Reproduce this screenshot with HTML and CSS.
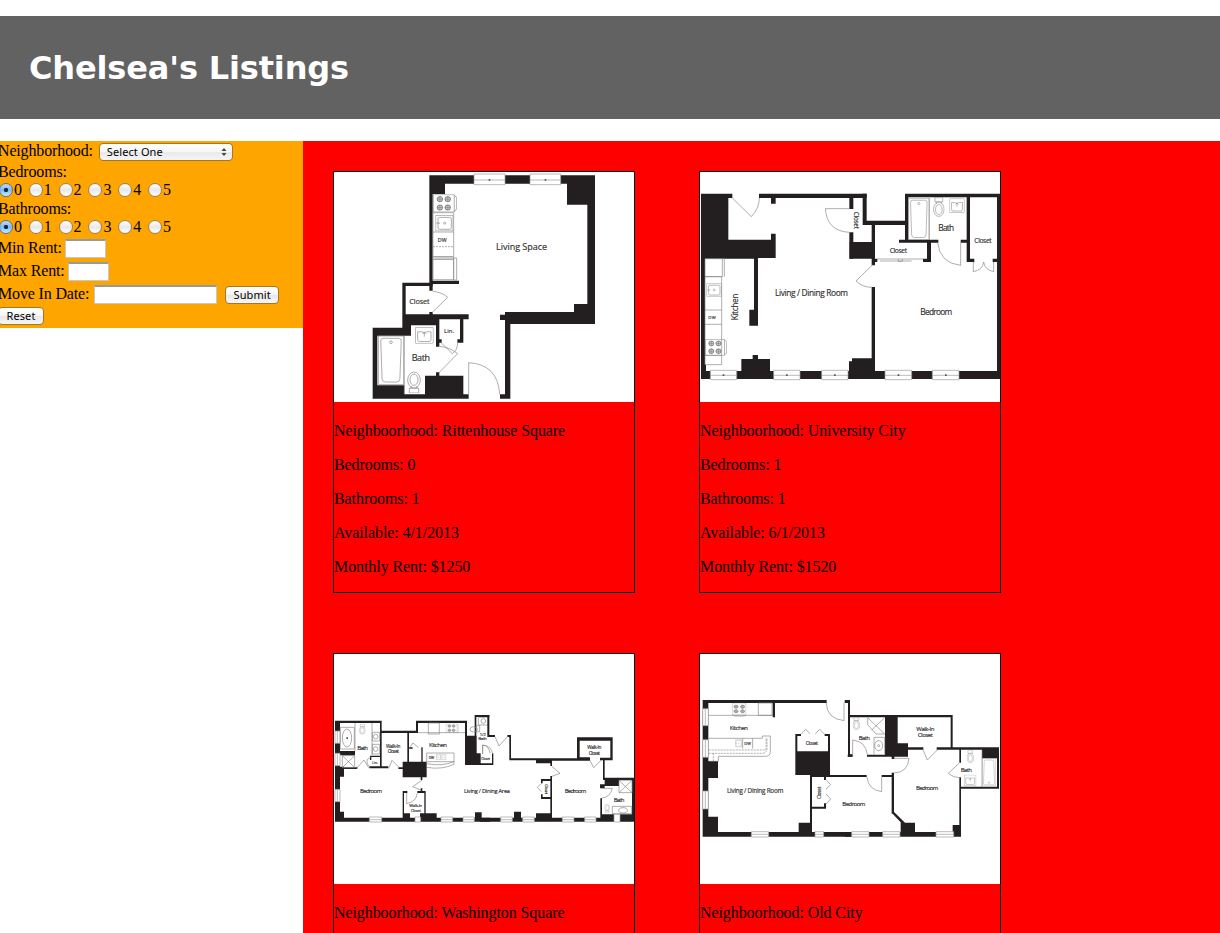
FILE: index.html
```html
<!DOCTYPE html>
<html lang="en">
<head>
<meta charset="utf-8">
<title>Chelsea's Listings</title>
<link rel="stylesheet" href="styles.css">
</head>
<body>
<svg class="defs" aria-hidden="true">
  <symbol id="stove" viewBox="0 0 70 56" preserveAspectRatio="none">
    <path class="f" d="M1 1H62V55H1zM62 4Q69 6 69 12V44Q69 50 62 52"/>
    <g class="burner"><circle cx="20" cy="15" r="8"/><circle cx="43" cy="15" r="8"/><circle cx="20" cy="41" r="8"/><circle cx="43" cy="41" r="8"/></g>
    <path class="f" d="M12 15h16M20 7v16M35 15h16M43 7v16M12 41h16M20 33v16M35 41h16M43 33v16"/>
  </symbol>
  <symbol id="sink" viewBox="0 0 54 48" preserveAspectRatio="none">
    <path class="f" d="M1 1H53V47H1z"/><rect class="f" x="8" y="7" width="40" height="35" rx="5"/><circle class="f" cx="28" cy="24" r="3"/><path class="f" d="M3 24H14"/>
  </symbol>
  <symbol id="basin" viewBox="0 0 56 52" preserveAspectRatio="none">
    <rect class="f" x="1" y="1" width="54" height="50" rx="3"/><path class="f" d="M8 15H21Q28 20 35 15H48V39Q48 45 42 45H14Q8 45 8 39zM28 17V30M23 22Q28 12 33 22"/>
  </symbol>
  <symbol id="toilet" viewBox="0 0 42 66" preserveAspectRatio="none">
    <path class="f" d="M7 1H35V15H7zM11 15L13 22M31 15L29 22"/><ellipse class="f" cx="21" cy="40" rx="19" ry="24"/><ellipse class="f" cx="21" cy="41" rx="12" ry="17"/>
  </symbol>
  <symbol id="tub" viewBox="0 0 76 150" preserveAspectRatio="none">
    <path class="f" d="M1 1H75V149H1z"/><path class="f" d="M14 8H62Q68 8 68 16L64 132Q63 141 54 141H22Q13 141 12 132L8 16Q8 8 14 8z"/><circle class="f" cx="38" cy="20" r="4"/>
  </symbol>
</svg>

<header class="banner"><h1 class="title">Chelsea's Listings</h1></header>

<main class="page">
  <form class="search">
    <div class="row row-select"><label for="hood">Neighborhood:</label><span class="select-wrap"><select id="hood" class="select"><option>Select One</option></select><svg class="arrows" viewBox="0 0 6 8"><path d="M3 0L5.5 3H.5zM3 8L.5 5H5.5z"/></svg></span></div>
    <div class="row">Bedrooms:</div>
    <div class="row radios">
      <label><input type="radio" name="bed" checked>0</label><label><input type="radio" name="bed">1</label><label><input type="radio" name="bed">2</label><label><input type="radio" name="bed">3</label><label><input type="radio" name="bed">4</label><label><input type="radio" name="bed">5</label>
    </div>
    <div class="row">Bathrooms:</div>
    <div class="row radios">
      <label><input type="radio" name="bath" checked>0</label><label><input type="radio" name="bath">1</label><label><input type="radio" name="bath">2</label><label><input type="radio" name="bath">3</label><label><input type="radio" name="bath">4</label><label><input type="radio" name="bath">5</label>
    </div>
    <div class="row row-field"><label for="min">Min Rent:</label><input id="min" class="field" type="text"></div>
    <div class="row row-field"><label for="max">Max Rent:</label><input id="max" class="field" type="text"></div>
    <div class="row row-field"><label for="date">Move In Date:</label><input id="date" class="field field-date" type="text"><button class="btn btn-submit" type="button">Submit</button></div>
    <div class="row row-reset"><button class="btn btn-reset" type="reset">Reset</button></div>
  </form>

  <section class="listings">
    <article class="card">
      <svg class="plan" viewBox="0 0 900 690">
        <g transform="translate(78 -12)">
          <path class="w" d="M208 22H705V47H208zM208 22H255V78H208zM208 22H218V368H208zM621 22H705V110H621zM682 22H705V468H682zM208 338H297V348H208z"/>
          <path class="win" d="M342 18H435V50H342zM342 36H435M510 18H602V50H510zM510 36H602"/>
          <path class="dot" d="M386 33h5v5h-5zM554 33h5v5h-5z"/>
          <path class="f" d="M219 134H281V266H219zM219 192H281M219 274H281V335H219zM281 270H290V336H281zM219 267H281V273H219"/>
          <path class="f dash" d="M219 236H281"/>
          <use href="#stove" x="219" y="79" width="72" height="54"/><use href="#sink" x="226" y="141" width="54" height="49"/>
          <text x="233" y="221" font-size="16" textLength="27">DW</text>
          <text x="408" y="245" font-size="27" textLength="153">Living Space</text>
        </g>
        <g transform="translate(78 324)">
          <path class="w" d="M127 8H218V18H127zM127 8H137V167H127zM127 103H238V136H127zM208 96H218V104H208zM238 103H326V118H238zM38 143H153V167H38zM38 143H52V356H38zM127 130H153V167H127zM38 316H133V356H38zM38 343H326V356H38zM195 287H310V356H195zM228 103H238V200H228zM238 178H245V188H238zM300 118H310V188H300zM292 178H310V188H292zM228 277H238V288H228zM642 72H705V132H642zM435 96H705V132H435zM420 104H451V120H420zM435 104H451V356H435zM420 343H451V356H420z"/>
          <path class="f" d="M218 34Q245 36 263 52L216 98M243 188L277 221Q292 212 293 188M238 199Q270 202 293 221L236 279M326 343V248Q414 253 419 343M133 168V343"/>
          <use href="#tub" x="54" y="167" width="78" height="148"/><use href="#basin" x="165" y="141" width="56" height="50"/>
          <use href="#toilet" x="141" y="274" width="42" height="66" transform="rotate(180 162 307)"/>
          <text x="148" y="73" font-size="22" textLength="61">Closet</text><text x="252" y="160" font-size="18" textLength="30">Lin.</text><text x="155" y="244" font-size="27" textLength="55">Bath</text>
        </g>
      </svg>
      <p>Neighboorhood: Rittenhouse Square</p><p>Bedrooms: 0</p><p>Bathrooms: 1</p><p>Available: 4/1/2013</p><p>Monthly Rent: $1250</p>
    </article>

    <article class="card">
      <svg class="plan" viewBox="0 0 900 690">
        <g transform="translate(-15 -12)">
          <path class="w" d="M18 77H112V90H18zM192 77H515V90H192zM18 77H100V216H18zM18 215H242V270H18zM228 197H242V220H228zM228 90H242V107H228zM18 77H30V633H18zM18 266H189V272H18zM177 270H189V473H177zM163 425H189V473H163zM463 90H475V123H463zM463 193H475V272H463zM18 609H530V633H18zM18 590H33V610H18zM139 573H225V610H139zM173 561H189V574H173z"/>
          <path class="win" d="M46 607H125V635H46zM46 622H125M236 607H315V635H236zM236 622H315M380 607H459V635H380zM380 622H459"/>
          <path class="dot" d="M83 619h5v5h-5zM273 619h5v5h-5zM417 619h5v5h-5z"/>
          <path class="f" d="M111 89L169 146Q193 120 193 90M463 122H391Q396 190 463 193M30 272H82V326H30zM82 272H88V326M30 326H80V590H30zM30 426H80M30 469H80M30 562H80"/>
          <use href="#sink" x="34" y="346" width="46" height="40"/><use href="#stove" x="30" y="513" width="66" height="50"/>
          <text x="40" y="452" font-size="13" textLength="22">DW</text><text transform="translate(129 457) rotate(-90)" font-size="25" textLength="80">Kitchen</text><text x="240" y="384" font-size="25" textLength="219">Living / Dining Room</text>
        </g>
        <g transform="translate(435 -12)">
          <path class="w" d="M53 77H65V170H53zM53 158H183V171H53zM180 77H190V218H180zM180 77H465V88H180zM456 77H465V633H456zM14 222H90V272H14zM80 168H90V292H80zM162 215H280V224H162zM246 224H258V282H246zM234 272H258V282H234zM90 272H97V282H90zM347 215H375V224H347zM365 88H375V282H365zM375 272H388V282H375zM443 272H456V282H443zM80 357H90V633H80zM21 571H90V633H21zM12 580H90V633H12zM80 609H465V633H80z"/>
          <path class="win" d="M120 607H200V635H120zM120 622H200M262 607H342V635H262zM262 622H342"/><path class="dot" d="M158 619h5v5h-5zM300 619h5v5h-5z"/>
          <path class="f" d="M82 291L33 339Q53 358 80 358M253 90V215M347 224V292Q285 286 278 224M385 282V311Q413 306 416 282Q419 306 446 311V282M97 273H234M105 279H200M160 273v7h12v-7"/>
          <use href="#tub" x="190" y="90" width="63" height="126"/><use href="#toilet" x="264" y="88" width="35" height="59"/><use href="#basin" x="313" y="91" width="46" height="44"/>
          <text x="280" y="190" font-size="25" textLength="47">Bath</text><text x="134" y="256" font-size="20" textLength="52">Closet</text><text x="388" y="225" font-size="20" textLength="52">Closet</text><text x="226" y="440" font-size="25" textLength="96">Bedroom</text><text transform="translate(28 131) rotate(90)" font-size="19" textLength="52">Closet</text>
        </g>
      </svg>
      <p>Neighboorhood: University City</p><p>Bedrooms: 1</p><p>Bathrooms: 1</p><p>Available: 6/1/2013</p><p>Monthly Rent: $1520</p>
    </article>

    <article class="card">
      <svg class="plan" viewBox="0 0 900 690">
        <g transform="translate(-12 153)">
          <path class="w" d="M15 47H155V54H15zM15 47H30V350H15zM150 47H155V190H150zM155 77H262V84H155zM258 47H264V84H258zM258 47H410V54H258zM232 84H237V172H232zM232 127H248V131H232zM274 127H278V172H274zM405 47H411V180H405zM434 30H439V95H434zM434 30H478V36H434zM408 92H440V180H408zM408 145H452V180H408zM30 138H75V151H30zM30 187H82V192H30zM118 184H175V190H118zM120 152H150V156H120zM120 152H124V165H120zM15 185H42V215H15zM205 187H235V192H205zM218 170H290V217H218zM272 217H277V225H272zM272 250H277V260H272zM218 258H232V264H218zM262 258H287V264H262zM218 258H222V340H218zM283 258H287V340H283zM15 338H480V350H15zM15 320H42V350H15zM222 325H240V340H222zM270 325H320V340H270zM435 322H455V340H435z"/>
          <path class="win" d="M118 336H155V351H118zM118 344H155M255 336H272V351H255zM333 336H368V351H333zM333 344H368M399 336H433V351H399zM399 344H433M15 78H30V115H15zM22 78V115M15 145H30V182H15zM22 145V182M15 253H30V290H15zM22 253V290"/>
          <path class="f" d="M31 67H73V132H31zM75 54V138M126 54V150M37 152H74V188H37zM37 152L74 188M74 152L37 188M80 190L102 165L116 188M122 157Q100 165 120 187M176 190L186 166L208 188M237 130L249 114L265 127M277 225L248 245L272 255M230 264V296Q260 290 262 264M264 83H405M295 54H328V87H295zM290 144H372V170H290zM290 176Q335 185 372 170V178Q335 195 290 187M127 82H149V108H127zM127 118H149V147H127zM445 37H475V60H445zM439 62h10v18h-10zM458 147V120Q477 122 480 145"/>
          <ellipse class="f" cx="51" cy="99" rx="14" ry="27"/><path class="dot" d="M49 97h5v5h-5z"/><circle class="f" cx="137" cy="95" r="7"/><circle class="f" cx="137" cy="132" r="7"/>
          <use href="#toilet" x="87" y="57" width="20" height="32"/><use href="#stove" x="347" y="56" width="39" height="27"/><use href="#sink" x="318" y="147" width="15" height="19"/><use href="#sink" x="334" y="147" width="15" height="19"/>
          <ellipse class="f" cx="431" cy="73" rx="11" ry="8"/><circle class="f" cx="460" cy="48" r="7"/>
          <text x="82" y="136" font-size="18" textLength="32">Bath</text><text x="168" y="129" font-size="14" textLength="43">Walk-In</text><text x="173" y="145" font-size="14" textLength="34">Closet</text><text x="297" y="125" font-size="18" textLength="54">Kitchen</text><text x="90" y="263" font-size="18" textLength="66">Bedroom</text><text x="402" y="263" font-size="17" textLength="138">Living / Dining Area</text><text x="238" y="307" font-size="12" textLength="38">Walk-In</text><text x="243" y="321" font-size="12" textLength="30">Closet</text><text x="127" y="177" font-size="10">Lin.</text><text x="296" y="162" font-size="10">DW</text><text x="449" y="92" font-size="12">1/2</text><text x="445" y="105" font-size="13" textLength="25">Bath</text>
        </g>
        <g transform="translate(438 153)">
          <path class="w" d="M22 30H28V95H22zM0 30H28V36H0zM22 90H45V96H22zM82 90H93V96H82zM88 90H93V165H88zM88 160H300V166H88zM36 145H40V180H36zM0 175H40V180H0zM168 163H215V175H168zM211 165H216V183H211zM211 213H216V350H211zM183 222H216V228H183zM183 276H216V282H183zM183 222H188V235H183zM183 268H188V282H183zM168 325H216V350H168zM102 320H123V340H102zM291 97H398V107H291zM291 97H299V165H291zM391 97H398V165H391zM291 157H330V166H291zM216 162H330V167H216zM360 158H398V166H360zM369 165H374V220H369zM369 218H463V225H369zM374 218H417V243H374zM360 238H374V250H360zM456 218H463V350H456zM361 280H366V340H361zM0 338H463V350H0zM366 328H403V340H366zM420 328H463V350H420z"/>
          <path class="win" d="M62 336H97V351H62zM62 344H97M128 336H163V351H128zM128 344H163M247 336H282V351H247zM247 344H282M314 336H348V351H314zM314 344H348M402 328H420V351H402z"/>
          <path class="f" d="M45 95L57 123L83 94M8 147V120Q34 122 38 147M216 184L240 205L216 214M184 235L172 247L184 260M330 166L341 188L364 165M366 279Q390 277 397 250H366M417 226H456V263H417zM417 226L456 263M456 226L417 263M397 304H455V326H397z"/>
          <ellipse class="f" cx="429" cy="316" rx="13" ry="8"/><use href="#toilet" x="373" y="297" width="17" height="28" transform="rotate(180 381.5 311)"/>
          <text x="322" y="133" font-size="14" textLength="42">Walk-In</text><text x="326" y="149" font-size="14" textLength="34">Closet</text><text x="254" y="263" font-size="18" textLength="65">Bedroom</text><text x="401" y="290" font-size="18" textLength="32">Bath</text><text x="4" y="165" font-size="10" textLength="26">Closet</text><text transform="translate(195 238) rotate(90)" font-size="11" textLength="29">Closet</text>
        </g>
      </svg>
      <p>Neighboorhood: Washington Square</p><p>Bedrooms: 2</p><p>Bathrooms: 2.5</p><p>Available: 5/1/2013</p><p>Monthly Rent: $2400</p>
    </article>

    <article class="card">
      <svg class="plan" viewBox="0 0 900 690">
        <g transform="translate(-12 108)">
          <path class="w" d="M20 30H392V39H20zM20 30H37V440H20zM20 213H66V264H20zM20 380H66V440H20zM230 39H237V82H230zM20 426H480V440H20zM308 398H348V440H308zM342 255H348V440H342zM298 132H304V185H298zM298 132H315V138H298zM386 132H402V138H386zM396 132H402V255H396zM298 184H402V255H298zM342 255H480V261H342zM446 30H462V39H446zM456 30H462V200H456zM456 193H470V200H456zM384 261H390V270H384zM384 340H390V356H384zM348 350H390V356H348z"/>
          <path class="win" d="M20 56H37V107H20zM28 56V107M20 149H37V202H20zM28 149V202M20 303H37V357H20zM28 303V357M166 425H218V441H166zM166 433H218M357 425H383V441H357zM357 433H383"/>
          <path class="f" d="M391 39Q392 86 444 92V39M37 76H230M187 39H228V76H187zM38 145H199V138H223V185Q223 199 208 199H67V214H38M140 145V176M170 145V176M315 133L329 118L342 131M358 131L371 118L387 134M390 269L404 284L390 297M390 312L404 327L390 342"/>
          <path class="f dash" d="M38 180H210V143M38 190H200Q213 188 213 176V143M52 190V213"/>
          <g transform="translate(150 38) rotate(90)"><use href="#stove" y="-1" width="42" height="42"/></g><use href="#sink" x="117" y="148" width="21" height="24"/>
          <text x="101" y="121" font-size="18" textLength="55">Kitchen</text><text x="145" y="165" font-size="12">DW</text><text x="93" y="308" font-size="19" textLength="169">Living / Dining Room</text><text x="329" y="164" font-size="14" textLength="37">Closet</text><text transform="translate(375 327) rotate(-90)" font-size="14" textLength="37">Closet</text>
        </g>
        <g transform="translate(435 108)">
          <path class="w" d="M14 75H322V82H14zM120 75H158V200H120zM120 160H189V200H120zM66 194H189V200H66zM8 194H22V200H8zM317 75H323V175H317zM189 172H235V179H189zM275 172H462V179H275zM456 172H462V296H456zM411 172H462V205H411zM343 179H348V218H343zM343 262H348V440H343zM343 290H462V296H343zM0 255H65V261H0zM110 255H147V261H110zM140 248H147V371H140zM140 198H148V207H140zM140 368L147 366L180 398L174 404zM167 398H210V440H167zM0 426H348V440H0zM323 405H348V440H323z"/>
          <path class="win" d="M20 425H72V441H20zM20 433H72M113 425H165V441H113zM113 433H165M273 425H326V441H273zM273 433H326"/>
          <path class="f" d="M23 200V150Q62 154 67 194M68 83V104L93 132H119M68 83L119 132M119 83L80 120M87 142H119V193M87 142V193M192 205H147M192 205Q189 247 147 249M66 261Q70 300 110 305V261M234 179L247 210L278 179M343 219L310 250Q324 263 343 263M411 179V290"/>
          <ellipse class="f" cx="101" cy="167" rx="12" ry="15"/><circle class="f" cx="101" cy="167" r="3"/>
          <use href="#toilet" x="23" y="83" width="22" height="37"/><use href="#toilet" x="365" y="181" width="22" height="38"/><use href="#tub" x="411" y="205" width="42" height="84" transform="rotate(180 432 247)"/><use href="#basin" x="357" y="254" width="37" height="34"/>
          <text x="41" y="150" font-size="18" textLength="34">Bath</text><text x="214" y="122" font-size="18" textLength="54">Walk-In</text><text x="218" y="142" font-size="18" textLength="46">Closet</text><text x="213" y="300" font-size="18" textLength="67">Bedroom</text><text x="-8" y="349" font-size="18" textLength="69">Bedroom</text><text x="347" y="245" font-size="18" textLength="34">Bath</text>
        </g>
      </svg>
      <p>Neighboorhood: Old City</p><p>Bedrooms: 2</p><p>Bathrooms: 2</p><p>Available: 5/1/2013</p><p>Monthly Rent: $2100</p>
    </article>
  </section>
</main>
</body>
</html>
```
FILE: styles.css
```css
* { box-sizing: border-box; }
html { background: #fff; }
body { margin: 0; height: 933px; overflow: hidden; padding-top: 16px; color: #000; font: 16px/18px "Liberation Serif", "Times New Roman", serif; letter-spacing: -0.08px; }
.defs { position: absolute; width: 0; height: 0; }

.banner { height: 103px; padding: 32px 29px; background: #626262; }
.title { margin: 0; color: #fff; font: bold 32px/41px "DejaVu Sans", Verdana, sans-serif; letter-spacing: -0.15px; white-space: nowrap; }

.page { display: flex; align-items: flex-start; margin-top: 22px; }

.search { width: 303px; height: 187px; flex: none; background: orange; overflow: hidden; }
.row { display: flex; align-items: flex-start; height: 18px; margin-left: -2px; white-space: nowrap; letter-spacing: -0.16px; }
.row-select { height: 22px; padding-top: 1px; }
.select-wrap { display: flex; position: relative; margin: 0 0 0 6px; }
.select { appearance: none; width: 134px; height: 18px; margin: 1px 0 0; padding: 0 7px; border: 1px solid #a07828; border-radius: 4px; background: linear-gradient(#fff, #f6f6f6 50%, #e9e9e9 51%, #f5f5f5); color: #000; font: 11px/14px "Noto Sans", sans-serif; letter-spacing: 0.1px; }
.arrows { position: absolute; right: 6px; top: 6px; width: 6px; height: 8px; fill: #444; }
.radios { height: 19px; margin-left: -1px; letter-spacing: 0; }
.radios label { display: flex; width: 29.8px; }
.radios input { appearance: none; flex: none; width: 14px; height: 14px; margin: 2px 1px 0 0; border: 1px solid #98835d; border-radius: 50%; background: linear-gradient(#fff, #e8e8e8 50%, #fff); }
.radios input:checked { border-color: #4f7397; background: radial-gradient(circle, #122b48 0 1.8px, transparent 2.5px), linear-gradient(#c5dcf5, #82b8ef 50%, #c8efff); }
.row-field { height: 23px; padding-top: 2px; }
.field { width: 41px; height: 19px; margin: 0 0 0 3px; padding: 0; border: 1px solid #c8c8c8; border-top: 2px solid #999; background: #fff; }
.field-date { width: 123px; margin-left: 5px; }
.btn { height: 18px; margin: 0; padding: 0; border: 1px solid #a07828; border-radius: 4px; background: linear-gradient(#fff, #f4f4f4 50%, #e8e8e8 51%, #f6f6f6); color: #000; font: 11px/16px "Noto Sans", sans-serif; letter-spacing: 0.1px; }
.btn-submit { width: 54px; margin: 1px 0 0 8px; }
.row-reset { height: 22px; padding-top: 1px; }
.btn-reset { width: 46px; }

.listings { display: grid; grid-template-columns: 302px 302px; column-gap: 64px; row-gap: 60px; align-content: start; flex: 1; height: 792px; padding: 30px; background: #f00; overflow: hidden; }
.card { height: 422px; border: 1px solid #000; }
.card p { margin: 0 0 16px; white-space: nowrap; }
.plan { display: block; width: 300px; height: 230px; margin-bottom: 20px; background: #fff; }
.plan text { fill: #333; stroke: #333; stroke-width: 0.5; font-family: "Open Sans", "Noto Sans", sans-serif; letter-spacing: 0; }
.w { fill: #231f20; }
.win { fill: #fff; stroke: #999; stroke-width: 2; }
.dot { fill: #555; }
.f { fill: none; stroke: #858585; stroke-width: 2; }
.dash { stroke-dasharray: 6 3; }
.burner { fill: #ccc; stroke: #555; stroke-width: 2; }
```
